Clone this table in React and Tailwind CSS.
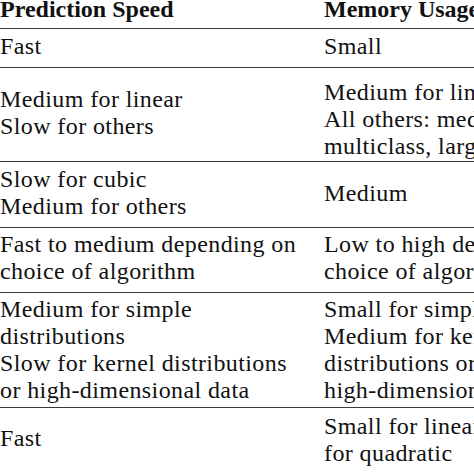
const rows = [
  {
    h: "h-[39px]",
    left: { pt: "pt-[4px]", lines: ["Fast"] },
    right: { pt: "pt-[4px]", lines: ["Small"] },
  },
  {
    h: "h-[94px]",
    left: { pt: "pt-[18px]", lines: ["Medium for linear", "Slow for others"] },
    right: {
      pt: "pt-[11px]",
      lines: ["Medium for linear", "All others: medium for", "multiclass, large for binary"],
    },
  },
  {
    h: "h-[66px]",
    left: { pt: "pt-[4px]", lines: ["Slow for cubic", "Medium for others"] },
    right: { pt: "pt-[18px]", lines: ["Medium"] },
  },
  {
    h: "h-[65px]",
    left: { pt: "pt-[3px]", lines: ["Fast to medium depending on", "choice of algorithm"] },
    right: { pt: "pt-[3px]", lines: ["Low to high depending on", "choice of algorithm"] },
  },
  {
    h: "h-[115px]",
    left: {
      pt: "pt-[3px]",
      lines: [
        "Medium for simple",
        "distributions",
        "Slow for kernel distributions",
        "or high-dimensional data",
      ],
    },
    right: {
      pt: "pt-[3px]",
      lines: [
        "Small for simple distributions",
        "Medium for kernel",
        "distributions or",
        "high-dimensional data",
      ],
    },
  },
  {
    h: "h-[80px]",
    left: { pt: "pt-[17px]", lines: ["Fast"] },
    right: { pt: "pt-[5px]", lines: ["Small for linear, large", "for quadratic"] },
  },
];

function Cell({ pt, lines }) {
  return (
    <div className={`${pt} whitespace-nowrap`}>
      {lines.map((l) => (
        <div key={l}>{l}</div>
      ))}
    </div>
  );
}

export default function App() {
  return (
    <div className="w-[474px] h-[474px] overflow-hidden bg-white">
      <div
        className="w-[680px] text-[24px] leading-[27px] text-[#111] tracking-[0.4px]"
        style={{ fontFamily: '"Liberation Serif", serif' }}
      >
        <div className="grid grid-cols-[324px_1fr] h-[29px] border-b border-[#3a3a3a] font-bold leading-[18px] tracking-normal">
          <div className="whitespace-nowrap">Prediction Speed</div>
          <div className="whitespace-nowrap">Memory Usage</div>
        </div>
        {rows.map((r, i) => (
          <div
            key={i}
            className={`grid grid-cols-[324px_1fr] ${r.h} border-b border-[#3a3a3a]`}
          >
            <Cell {...r.left} />
            <Cell {...r.right} />
          </div>
        ))}
      </div>
    </div>
  );
}
